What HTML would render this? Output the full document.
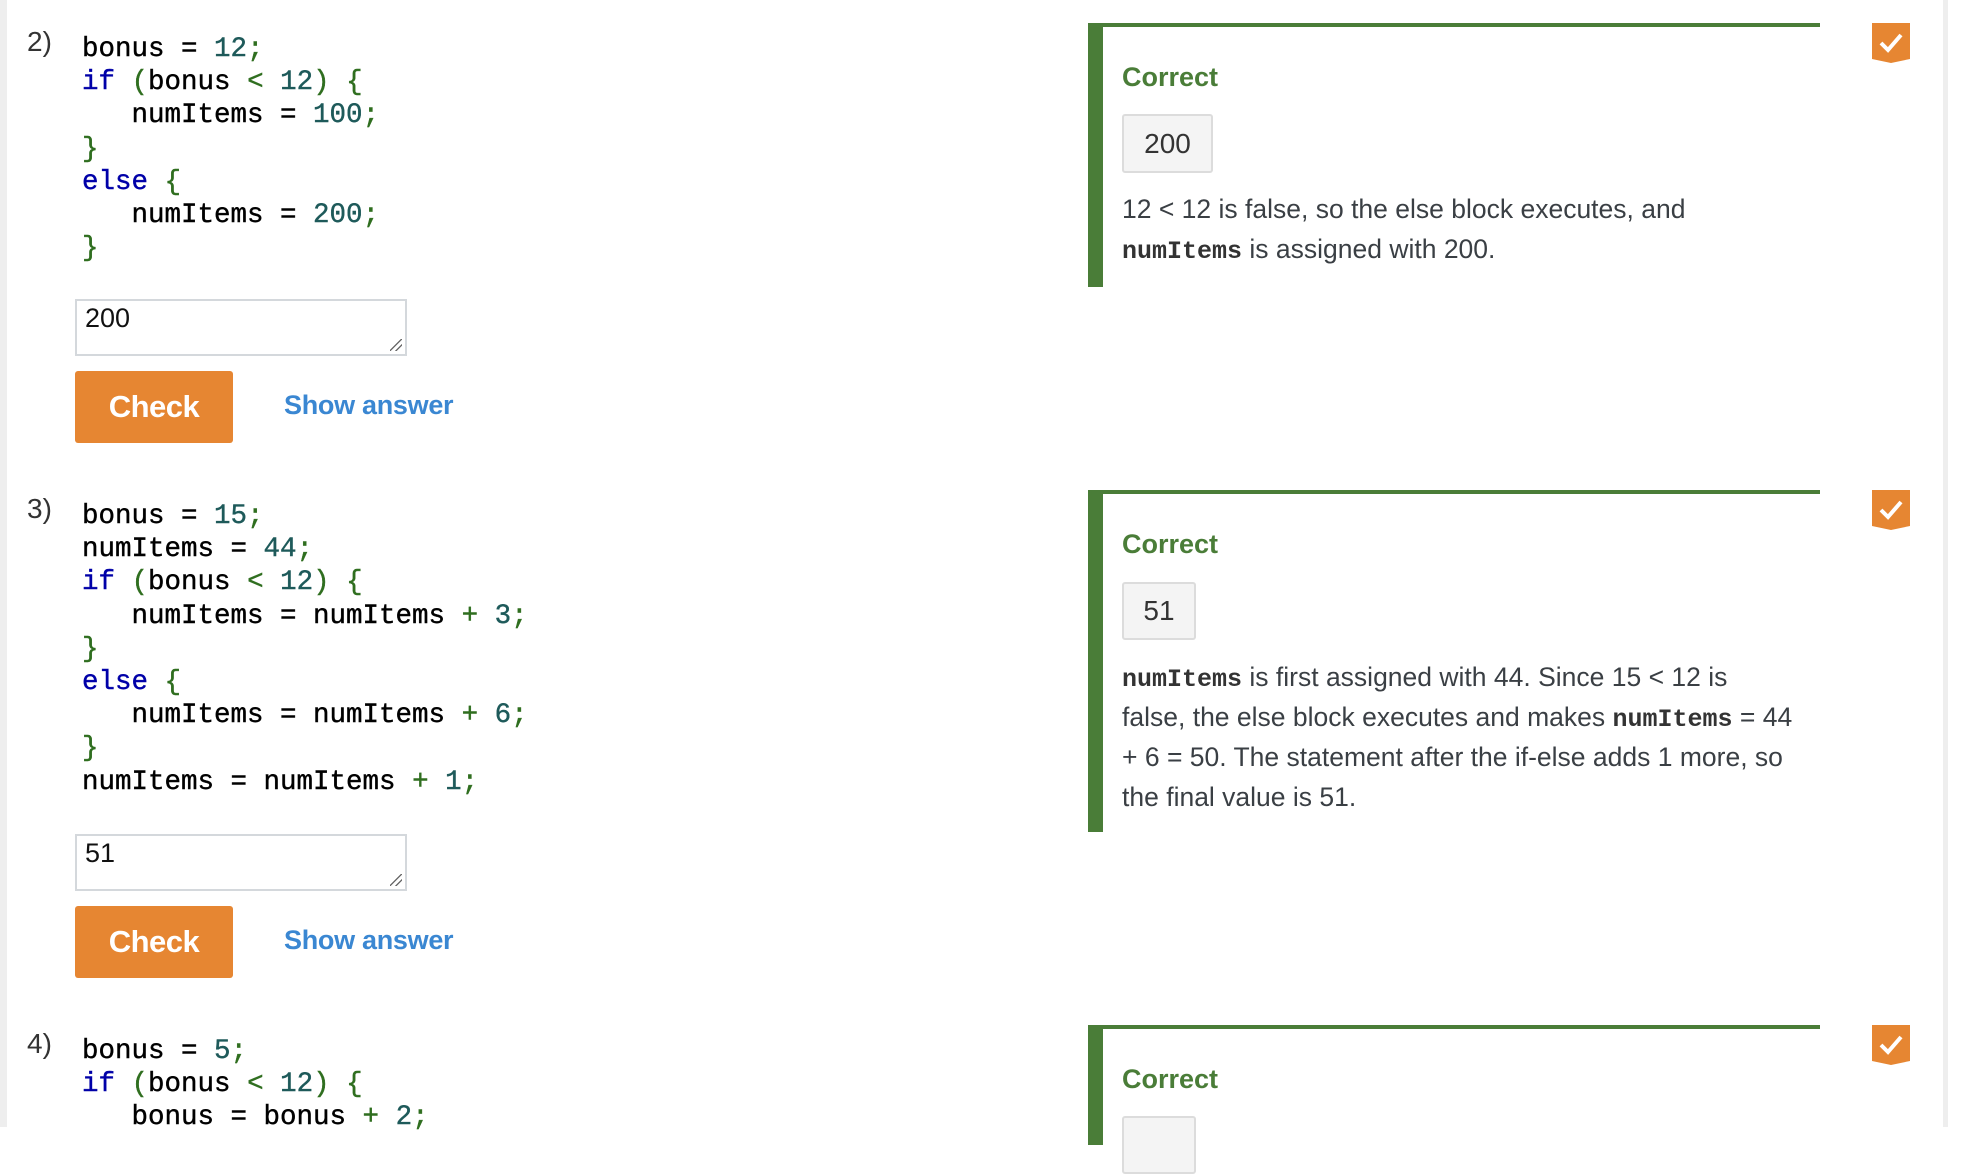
<!DOCTYPE html>
<html><head><meta charset="utf-8"><style>
body{margin:0;width:1963px;height:1127px;overflow:hidden;background:#fff;position:relative;font-family:"Liberation Sans",sans-serif}
.abs{position:absolute}
.lb{left:0;top:0;width:7px;height:1127px;background:#eeeeee}
.rb{left:1943px;top:0;width:5px;height:1127px;background:#eeeeee}
.num{font-size:28px;color:#333;font-weight:300}
pre{margin:0;font-family:"Liberation Mono",monospace;font-size:27.5px;line-height:33.2px;color:#000;-webkit-text-stroke:0.4px currentColor}
.k{color:#0000a8}.n{color:#1e5a5a}.p{color:#2f6e1f}
.ta{border:2px solid #d4d8dc;box-sizing:border-box;width:332px;height:57px;font-size:27px;padding:2px 8px;color:#111}
.ta:after{content:"";position:absolute;right:3px;bottom:3px;width:12px;height:12px;background:linear-gradient(135deg,transparent 45%,#666 46%,#666 52%,transparent 53%,transparent 70%,#666 71%,#666 77%,transparent 78%)}
.btn{width:158px;height:72px;background:#e68632;border-radius:3px;color:#fff;font-weight:bold;font-size:31px;line-height:72px;text-align:center;letter-spacing:-0.5px}
.sa{color:#3a87d2;font-weight:bold;font-size:27px;letter-spacing:-0.3px}
.fb{left:1088px;width:732px;border-top:4px solid #4a7d38;border-left:15px solid #4a7d38;box-sizing:border-box}
.cor{color:#4a7d38;font-weight:bold;font-size:27px}
.val{border:2px solid #dcdcdc;background:#f4f4f4;border-radius:3px;font-size:28px;color:#333;text-align:center;box-sizing:border-box}
.ex{font-size:26.5px;line-height:40px;color:#3a3f44}
.ex code{font-family:"Liberation Mono",monospace;font-weight:bold;font-size:25px;color:#333;line-height:1}
.badge{width:38px;height:40px}
</style></head><body>
<div class="abs lb"></div><div class="abs rb"></div>

<!-- Q2 -->
<div class="abs num" style="left:27px;top:26px">2)</div>
<pre class="abs" style="left:82px;top:33px">bonus = <span class="n">12</span><span class="p">;</span>
<span class="k">if</span> <span class="p">(</span>bonus <span class="p">&lt;</span> <span class="n">12</span><span class="p">)</span> <span class="p">{</span>
   numItems = <span class="n">100</span><span class="p">;</span>
<span class="p">}</span>
<span class="k">else</span> <span class="p">{</span>
   numItems = <span class="n">200</span><span class="p">;</span>
<span class="p">}</span></pre>
<div class="abs ta" style="left:75px;top:299px">200</div>
<div class="abs btn" style="left:75px;top:371px">Check</div>
<div class="abs sa" style="left:284px;top:390px">Show answer</div>
<div class="abs fb" style="top:23px;height:264px"></div>
<div class="abs cor" style="left:1122px;top:62px">Correct</div>
<div class="abs val" style="left:1122px;top:114px;width:91px;height:59px;line-height:55px">200</div>
<div class="abs ex" style="left:1122px;top:189px">12 &lt; 12 is false, so the else block executes, and<br><code>numItems</code> is assigned with 200.</div>
<svg class="abs badge" style="left:1872px;top:23px" viewBox="0 0 38 40"><path d="M0 0H38V36L19 40L0 36Z" fill="#e68632"/><path d="M9 20L16 27L29 12" stroke="#fff" stroke-width="4" fill="none"/></svg>

<!-- Q3 -->
<div class="abs num" style="left:27px;top:493px">3)</div>
<pre class="abs" style="left:82px;top:500px">bonus = <span class="n">15</span><span class="p">;</span>
numItems = <span class="n">44</span><span class="p">;</span>
<span class="k">if</span> <span class="p">(</span>bonus <span class="p">&lt;</span> <span class="n">12</span><span class="p">)</span> <span class="p">{</span>
   numItems = numItems <span class="p">+</span> <span class="n">3</span><span class="p">;</span>
<span class="p">}</span>
<span class="k">else</span> <span class="p">{</span>
   numItems = numItems <span class="p">+</span> <span class="n">6</span><span class="p">;</span>
<span class="p">}</span>
numItems = numItems <span class="p">+</span> <span class="n">1</span><span class="p">;</span></pre>
<div class="abs ta" style="left:75px;top:834px">51</div>
<div class="abs btn" style="left:75px;top:906px">Check</div>
<div class="abs sa" style="left:284px;top:925px">Show answer</div>
<div class="abs fb" style="top:490px;height:342px"></div>
<div class="abs cor" style="left:1122px;top:529px">Correct</div>
<div class="abs val" style="left:1122px;top:582px;width:74px;height:58px;line-height:54px">51</div>
<div class="abs ex" style="left:1122px;top:657px"><code>numItems</code> is first assigned with 44. Since 15 &lt; 12 is<br>false, the else block executes and makes <code>numItems</code> = 44<br>+ 6 = 50. The statement after the if-else adds 1 more, so<br>the final value is 51.</div>
<svg class="abs badge" style="left:1872px;top:490px" viewBox="0 0 38 40"><path d="M0 0H38V36L19 40L0 36Z" fill="#e68632"/><path d="M9 20L16 27L29 12" stroke="#fff" stroke-width="4" fill="none"/></svg>

<!-- Q4 -->
<div class="abs num" style="left:27px;top:1028px">4)</div>
<pre class="abs" style="left:82px;top:1035px">bonus = <span class="n">5</span><span class="p">;</span>
<span class="k">if</span> <span class="p">(</span>bonus <span class="p">&lt;</span> <span class="n">12</span><span class="p">)</span> <span class="p">{</span>
   bonus = bonus <span class="p">+</span> <span class="n">2</span><span class="p">;</span></pre>
<div class="abs fb" style="top:1025px;height:120px"></div>
<div class="abs cor" style="left:1122px;top:1064px">Correct</div>
<div class="abs val" style="left:1122px;top:1116px;width:74px;height:58px"></div>
<svg class="abs badge" style="left:1872px;top:1025px" viewBox="0 0 38 40"><path d="M0 0H38V36L19 40L0 36Z" fill="#e68632"/><path d="M9 20L16 27L29 12" stroke="#fff" stroke-width="4" fill="none"/></svg>
</body></html>
